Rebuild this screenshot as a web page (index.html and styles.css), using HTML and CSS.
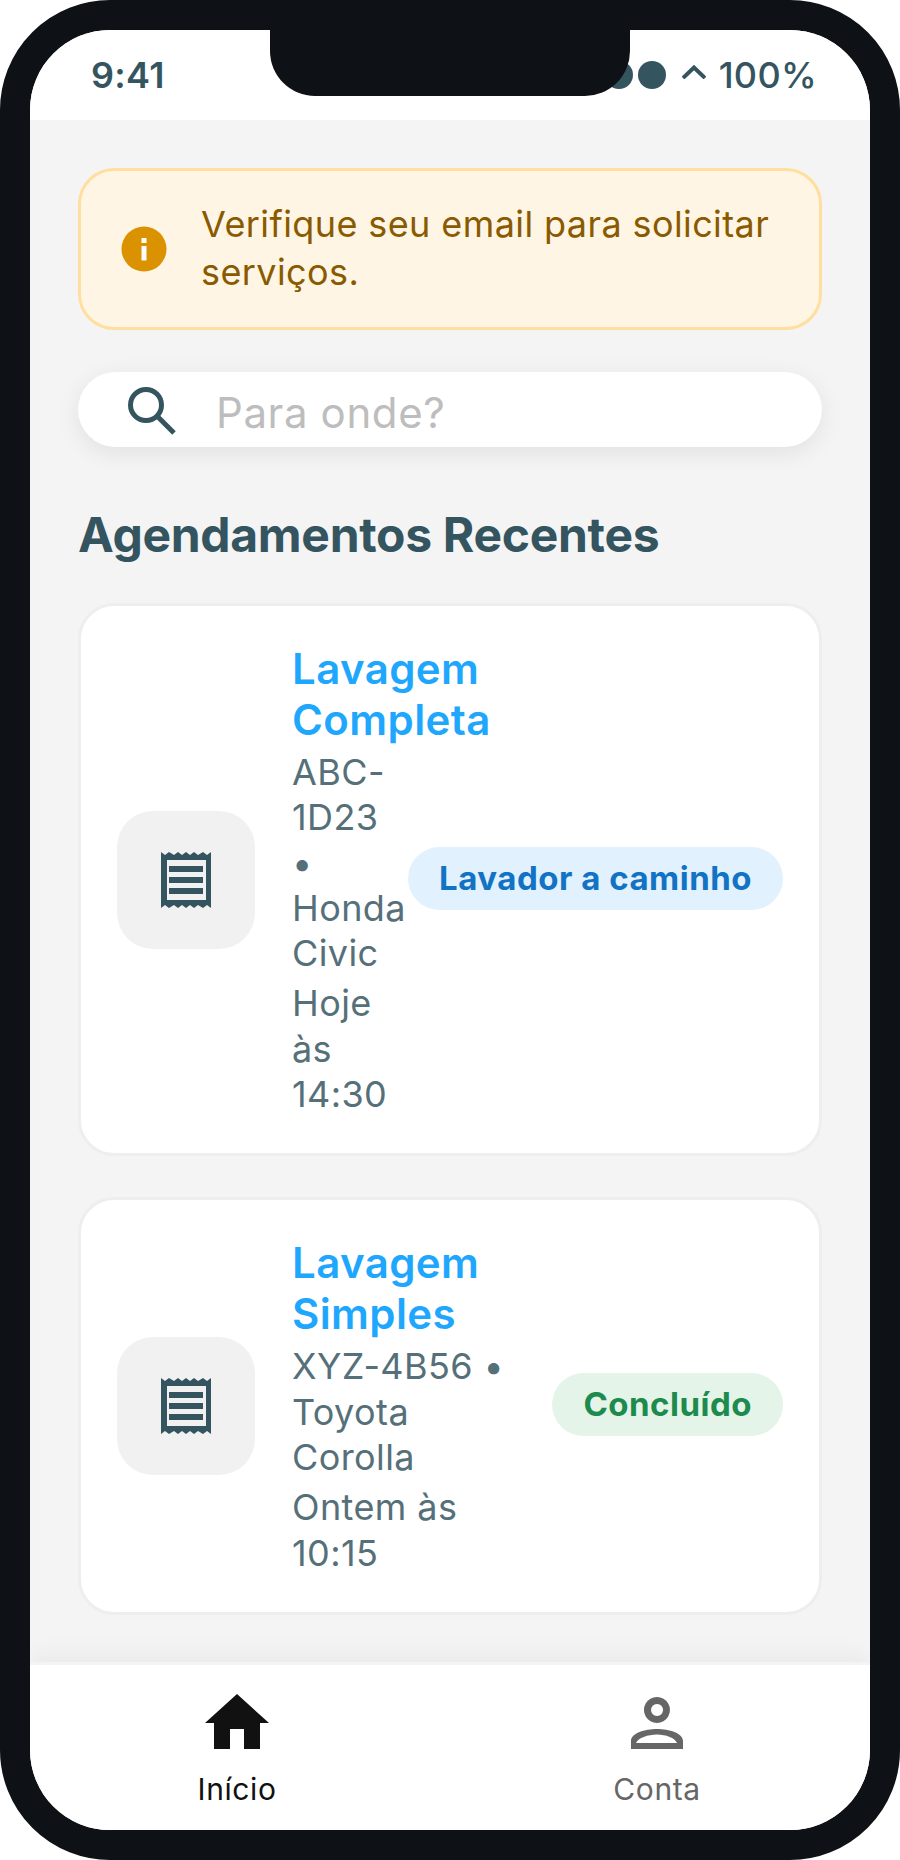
FILE: index.html
```html
<!doctype html>
<html>
<head>
<meta charset="utf-8">
<title>Início</title>
<link rel="stylesheet" href="styles.css">
</head>

<body>
<div class="phone">
	<div class="notch"></div>
	<div class="screen">
		<!--status bar-->
		<div class="status">
			<span class="time">9:41</span>
			<div class="status-right">
				<span class="dot"></span>
				<span class="dot"></span>
				<svg class="caret" width="24" height="14" viewBox="0 0 24 14"><path d="M1 13 L12 2.500 L23 13" fill="none" stroke="#34555f" stroke-width="4"/></svg>
				<span class="battery">100%</span>
			</div>
		</div>

		<div class="content">
			<!--email warning-->
			<div class="alert">
				<svg class="alert-icon" width="46" height="46" viewBox="0 0 46 46">
					<circle cx="23" cy="23" r="22.5" fill="#db9200"/>
					<rect x="20.5" y="12" width="5" height="5" fill="#fff"/>
					<rect x="20.5" y="20" width="5" height="14.500" fill="#fff"/>
				</svg>
				<p class="alert-text">Verifique seu email para solicitar serviços.</p>
			</div>

			<!--search-->
			<div class="search">
				<svg width="48" height="48" viewBox="0 0 48 48">
					<circle cx="18" cy="18" r="15.500" fill="none" stroke="#34555f" stroke-width="5"/>
					<path d="M29 29 L46 46" fill="none" stroke="#34555f" stroke-width="5"/>
				</svg>
				<span class="search-text">Para onde?</span>
			</div>

			<h2 class="section-title">Agendamentos Recentes</h2>

			<div class="card">
				<div class="card-icon">
					<svg width="50" height="56" viewBox="0 0 50 56"><path fill="#34555f" fill-rule="evenodd" d="M0 0 L4 3 L8 0 L13 3 L17 0 L21 3 L25 0 L29 3 L33 0 L37 3 L42 0 L46 3 L50 0 V56 L46 53 L42 56 L37 53 L33 56 L29 53 L25 56 L21 53 L17 56 L13 53 L8 56 L4 53 L0 56 Z M6 8 V48 H45 V8 Z M8 14 H42 V20 H8 Z M8 25 H42 V31 H8 Z M8 36 H42 V42 H8 Z"/></svg>
				</div>
				<div class="card-body">
					<div class="card-title">Lavagem Completa</div>
					<div class="card-sub">ABC-1D23 • Honda Civic</div>
					<div class="card-sub">Hoje às 14:30</div>
				</div>
				<span class="pill pill-blue">Lavador a caminho</span>
			</div>

			<div class="card">
				<div class="card-icon">
					<svg width="50" height="56" viewBox="0 0 50 56"><path fill="#34555f" fill-rule="evenodd" d="M0 0 L4 3 L8 0 L13 3 L17 0 L21 3 L25 0 L29 3 L33 0 L37 3 L42 0 L46 3 L50 0 V56 L46 53 L42 56 L37 53 L33 56 L29 53 L25 56 L21 53 L17 56 L13 53 L8 56 L4 53 L0 56 Z M6 8 V48 H45 V8 Z M8 14 H42 V20 H8 Z M8 25 H42 V31 H8 Z M8 36 H42 V42 H8 Z"/></svg>
				</div>
				<div class="card-body">
					<div class="card-title">Lavagem Simples</div>
					<div class="card-sub">XYZ-4B56 • Toyota Corolla</div>
					<div class="card-sub">Ontem às 10:15</div>
				</div>
				<span class="pill pill-green">Concluído</span>
			</div>
		</div>

		<!--bottom tabs-->
		<div class="tabs">
			<div class="tab tab-active">
				<svg width="64" height="56" viewBox="0 0 64 56"><path fill="#111" fill-rule="evenodd" d="M32 0 L64 29 H55 V55 H39 V35 H25 V55 H9 V29 H0 Z"/></svg>
				<span>Início</span>
			</div>
			<div class="tab">
				<svg width="64" height="56" viewBox="0 0 64 56"><path fill="#666" fill-rule="evenodd" d="M32 3 A13 13 0 1 1 31.900 3 Z M32 10 A6 6 0 1 0 32.100 10 Z M6 55 V47 C6 39 20 35 32 35 S58 39 58 47 V55 Z M11 49 H52 C50 44 41 40.500 32 40.500 S13 44 11 49 Z"/></svg>
				<span>Conta</span>
			</div>
		</div>
	</div>
</div>
</body>
</html>
```

FILE: styles.css
```css
* {
	box-sizing: border-box;
}

body {
	margin: 0;
	background: #fff;
	font-family: Inter, "Liberation Sans", sans-serif;
}

.phone {
	position: relative;
	width: 900px;
	height: 1860px;
	border: 30px solid #0e1216;
	border-radius: 110px;
	background: #0e1216;
}

.notch {
	position: absolute;
	top: 0;
	left: 240px;
	width: 360px;
	height: 66px;
	background: #0e1216;
	border-radius: 0 0 45px 45px;
	z-index: 2;
}

.screen {
	display: flex;
	flex-direction: column;
	height: 100%;
	background: #f4f4f4;
	border-radius: 80px;
	overflow: hidden;
}

.status {
	display: flex;
	justify-content: space-between;
	align-items: center;
	height: 90px;
	padding: 0 53px 0 61px;
	background: #fff;
	color: #34555f;
	font-size: 36px;
	font-weight: 600;
	letter-spacing: 0.3px;
	flex-shrink: 0;
}

.status-right {
	display: flex;
	align-items: center;
	gap: 5px;
}

.dot {
	width: 28px;
	height: 28px;
	border-radius: 50%;
	background: #34555f;
}

.caret {
	margin: 0 8px 6px 11px;
}

.battery {
	font-weight: 500;
}

.content {
	flex: 1;
	padding: 48px;
	min-height: 0;
}

.alert {
	display: flex;
	align-items: center;
	gap: 34px;
	height: 162px;
	padding: 0 40px;
	background: #fef5e5;
	border: 3px solid #ffdf9f;
	border-radius: 36px;
}

.alert-icon {
	flex-shrink: 0;
}

.alert-text {
	margin: 0 0 2px 0;
	color: #8a5a00;
	font-size: 36px;
	line-height: 48px;
	letter-spacing: 0.4px;
}

.search {
	display: flex;
	align-items: center;
	gap: 40px;
	height: 75px;
	margin-top: 42px;
	padding: 3px 50px 0 50px;
	background: #fff;
	border-radius: 38px;
	box-shadow: 0 6px 24px rgba(0, 0, 0, 0.08);
}

.search-text {
	padding-top: 3px;
	color: #bdbdbd;
	font-size: 42px;
	letter-spacing: 0.6px;
}

.section-title {
	margin: 59px 0 39px 0;
	color: #34555f;
	font-size: 48px;
	line-height: 58px;
	font-weight: 700;
	letter-spacing: -0.3px;
}

.card {
	display: flex;
	align-items: center;
	margin-bottom: 41px;
	padding: 36px;
	background: #fff;
	border: 3px solid #eeeeee;
	border-radius: 36px;
}

.card-icon {
	display: flex;
	align-items: center;
	justify-content: center;
	width: 138px;
	height: 138px;
	margin-right: 37px;
	background: #f1f1f1;
	border-radius: 36px;
	flex-shrink: 0;
}

.card-body {
	flex: 1;
	min-width: 0;
	padding-top: 2px;
}

.card-title {
	margin-bottom: 5px;
	color: #1ea7fd;
	font-size: 42px;
	line-height: 50.5px;
	font-weight: 600;
	letter-spacing: 0.4px;
}

.card-sub {
	margin-bottom: 5px;
	color: #56707a;
	font-size: 36px;
	line-height: 45.3px;
	letter-spacing: 0.4px;
}

.card-sub:last-child {
	margin-bottom: 0;
}

.pill {
	margin: 0 0 3px 24px;
	padding: 0 31px;
	height: 63px;
	line-height: 63px;
	border-radius: 32px;
	font-size: 33px;
	font-weight: 700;
	letter-spacing: 0.5px;
	white-space: nowrap;
	flex-shrink: 0;
}

.pill-blue {
	background: #e1f1fe;
	color: #1273c4;
}

.pill-green {
	background: #e4f4e8;
	color: #1d8a4e;
}

.tabs {
	display: flex;
	height: 168px;
	padding-top: 29px;
	background: #fff;
	border-top: 3px solid #f4f4f4;
	box-shadow: 0 -6px 24px rgba(0, 0, 0, 0.05);
	flex-shrink: 0;
}

.tab {
	flex: 1;
	display: flex;
	flex-direction: column;
	align-items: center;
	margin: 0 3px 0 -3px;
	color: #666;
	font-size: 30px;
	letter-spacing: 0.6px;
}

.tab span {
	margin-top: 21px;
}

.tab-active {
	color: #111;
}
```
